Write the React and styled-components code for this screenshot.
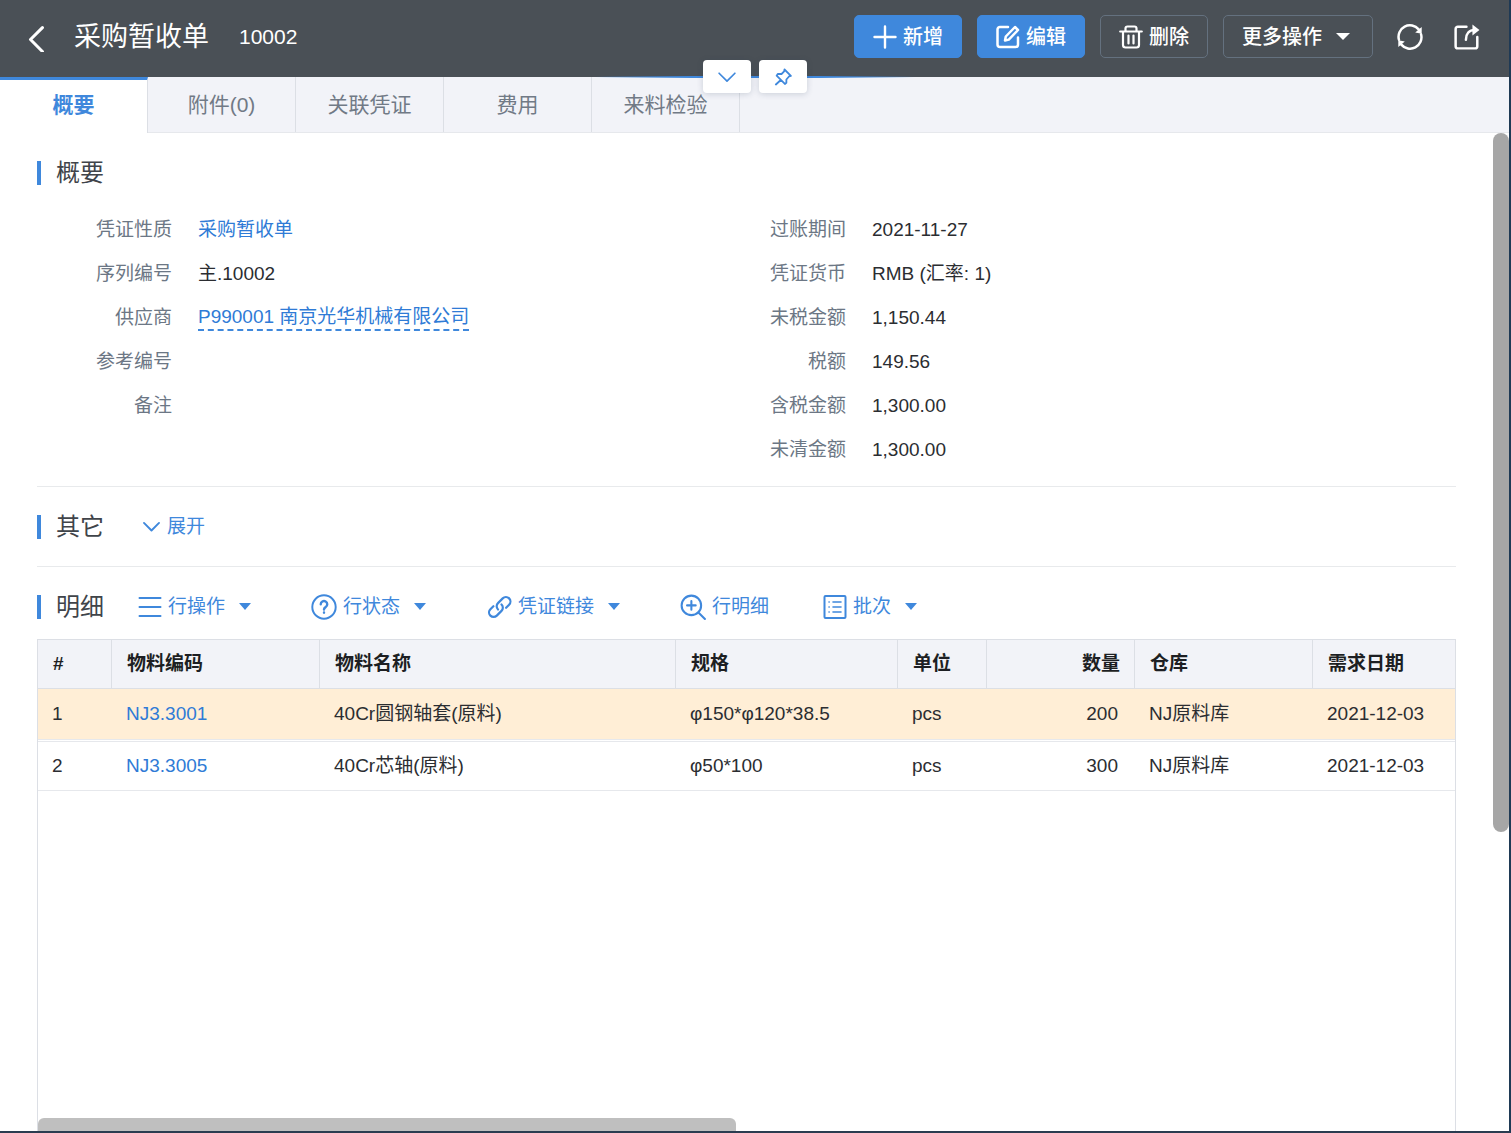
import React from 'react'
import styled, { createGlobalStyle } from 'styled-components'

const GlobalStyle = createGlobalStyle`
*{
    box-sizing: border-box;
}
body{
    margin: 0;
    background: #fff;
    color: #2b2d31;
    font-family: "Liberation Sans", "Noto Sans CJK SC", sans-serif;
    font-size: 19px;
    line-height: 28px;
}
button{
    margin: 0;
    padding: 0;
    border: 0;
    background: none;
    color: inherit;
    font: inherit;
    cursor: pointer;
}
a{
    color: #2f7bd6;
    text-decoration: none;
}
`

const Shell = styled.div`
display: flex;
flex-direction: column;
height: 100vh;
overflow: hidden;
border-right: 2px solid #1f3a55;
border-bottom: 2px solid #2a3c50;
`

const Header = styled.header`
display: flex;
align-items: center;
flex: none;
height: 77px;
padding: 0 29px 4px 24px;
background: #4a5056;
color: #fff;
position: relative;
`
const BackButton = styled.button`
display: flex;
margin-right: 24px;
padding-top: 4px;
`
const Title = styled.h1`
margin: 0;
font-size: 27px;
line-height: 40px;
font-weight: 400;
`
const DocNumber = styled.span`
margin-left: 30px;
font-size: 21px;
`
const Actions = styled.div`
display: flex;
align-items: center;
gap: 15px;
margin-left: auto;
`
const ActionButton = styled.button`
display: flex;
align-items: center;
justify-content: center;
gap: 6px;
height: 43px;
padding: 0 ${({ $menu }) => ($menu ? 22 : 18)}px 0 18px;
border: 1px solid ${({ $primary }) => ($primary ? '#3f88dc' : '#64717f')};
border-radius: 5px;
background: ${({ $primary }) => ($primary ? '#3f88dc' : 'transparent')};
font-size: 20px;
font-weight: 500;
`
const IconButton = styled.button`
display: flex;
margin-left: ${({ $gap }) => $gap}px;
`
const Handles = styled.div`
position: absolute;
top: 60px;
left: 50%;
transform: translateX(-50%);
display: flex;
gap: 8px;
z-index: 2;
`
const Handle = styled.button`
display: flex;
align-items: center;
justify-content: center;
width: 48px;
height: 33px;
border-radius: 4px;
background: #fff;
color: #3f88dc;
box-shadow: 0 1px 6px rgba(40, 60, 90, 0.2);
`
const HandleLine = styled.div`
position: absolute;
left: 50%;
bottom: -1px;
width: 320px;
height: 2px;
transform: translateX(-50%);
background: linear-gradient(90deg, transparent, #3f88dc 30%, #3f88dc 70%, transparent);
`

const Tabs = styled.nav`
display: flex;
flex: none;
height: 56px;
background: #f2f3f8;
border-bottom: 1px solid #e6e8ec;
`
const Tab = styled.button`
width: 148px;
height: ${({ $active }) => ($active ? 56 : 55)}px;
padding-bottom: ${({ $active }) => ($active ? 4 : 0)}px;
border-top: ${({ $active }) => ($active ? '3px solid #3f88dc' : '0')};
border-right: 1px solid #dcdfe5;
background: ${({ $active }) => ($active ? '#fff' : 'transparent')};
color: ${({ $active }) => ($active ? '#3f88dc' : '#717a86')};
font-size: 21px;
font-weight: ${({ $active }) => ($active ? 700 : 400)};
`

const Body = styled.div`
display: flex;
flex: 1;
min-height: 0;
`
const Content = styled.main`
display: flex;
flex-direction: column;
flex: 1;
min-width: 0;
padding: 0 37px;
`
const ScrollTrack = styled.div`
width: 16px;
flex: none;
`
const ScrollThumb = styled.div`
height: 70%;
border-radius: 8px;
background: #a6a6a6;
`

const Section = styled.section`
border-bottom: 1px solid #e8eaec;
`
const SectionHead = styled.div`
display: flex;
align-items: center;
height: 79px;
`
const SectionTitle = styled.h2`
display: flex;
align-items: center;
gap: 15px;
margin: 0;
font-size: 24px;
line-height: 36px;
font-weight: 400;
color: #40444a;

&::before{
    content: "";
    width: 4px;
    height: 24px;
    background: #3f88dc;
}
`
const Fields = styled.div`
display: grid;
grid-template-columns: 19fr 21fr;
margin-top: -4px;
padding-bottom: 14px;
`
const FieldList = styled.dl`
margin: 0;
`
const Field = styled.div`
display: flex;
align-items: center;
height: 44px;
`
const FieldLabel = styled.dt`
width: 135px;
margin-right: 26px;
text-align: right;
color: #6c7785;
`
const FieldValue = styled.dd`
margin: 0;
`
const SupplierLink = styled.a`
display: block;
line-height: 24px;
border-bottom: 2px dashed #3f88dc;
`

const ToolButton = styled.button`
display: flex;
align-items: center;
gap: 6px;
margin-left: ${({ $gap }) => $gap}px;
color: #3f88dc;
`
const Caret = styled.span`
margin-left: 8px;
border: ${({ $size }) => $size || 6}px solid transparent;
border-top-color: currentColor;
border-top-width: 7px;
border-bottom: 0;
`

const Details = styled.section`
display: flex;
flex-direction: column;
flex: 1;
min-height: 0;
`
const GridBox = styled.div`
display: flex;
flex-direction: column;
flex: 1;
min-height: 0;
margin-top: -7px;
border: 1px solid #dcdfe5;
border-bottom: 0;
overflow: hidden;
`
const Table = styled.table`
width: 100%;
table-layout: fixed;
border-collapse: separate;
border-spacing: 0;
`
const HeadCell = styled.th`
width: ${({ $width }) => ($width ? `${$width}px` : 'auto')};
height: 49px;
padding: 0 14px 0 15px;
border-right: 1px solid #dcdfe5;
border-bottom: 1px solid #dcdfe5;
background: #f2f3f8;
color: #1d1f23;
font-weight: 700;
text-align: ${({ $align }) => $align || 'left'};

&:last-child{
    border-right: 0;
}
`
const Cell = styled.td`
height: ${({ $selected }) => ($selected ? 53 : 49)}px;
padding: 0 17px 0 14px;
border-bottom: ${({ $selected }) => ($selected ? '3px double' : '1px solid')} #e6e8ec;
background: ${({ $selected }) => ($selected ? '#ffeed6' : '#fff')};
background-clip: padding-box;
text-align: ${({ $align }) => $align || 'left'};
white-space: nowrap;
`
const HScrollThumb = styled.div`
flex: none;
width: 698px;
max-width: 100%;
height: 13px;
margin-top: auto;
border-radius: 6px 6px 0 0;
background: #bfbfbf;
`

const Icon = ({ size = 24, stroke = 2, children }) => (
    <svg width={size} height={size} viewBox='0 0 24 24' fill='none' stroke='currentColor'
        strokeWidth={stroke} strokeLinecap='round' strokeLinejoin='round' aria-hidden='true'>
        {children}
    </svg>
)

const BackIcon = () => <Icon size={26} stroke={2.8}><path d='M17 1.5L6 12.5l11 11' /></Icon>
const PlusIcon = () => <Icon stroke={2.4}><path d='M12 1.500v21M1.500 12h21' /></Icon>
const EditIcon = () => (
    <Icon stroke={2.5}>
        <path d='M12 2H4a2.5 2.5 0 0 0-2.500 2.500v15A2.500 2.500 0 0 0 4 22h15.500a2.500 2.500 0 0 0 2.500-2.500V12.500' />
        <path d='M9 15.500l.8-4L19 2l3 3-9.200 9.600z' />
    </Icon>
)
const TrashIcon = () => (
    <Icon stroke={2.2}>
        <path d='M1.200 6.500h21.600M6.500 6V3.500a2 2 0 0 1 2-2h7a2 2 0 0 1 2 2V6M4 7v13a2.500 2.500 0 0 0 2.500 2.500h11A2.500 2.500 0 0 0 20 20V7M9.500 10.500v8M14.500 10.500v8' />
    </Icon>
)
const RefreshIcon = () => (
    <Icon size={26} stroke={2.3}>
        <path d='M1.800 14.500A10.500 10.500 0 0 1 20 5M22.200 9.500A10.500 10.500 0 0 1 4 19' />
        <path d='M22.800 2.800v6.200l-6-1.200zM1.200 21.200V15l6 1.200z' fill='currentColor' stroke='none' />
    </Icon>
)
const ShareIcon = () => (
    <Icon size={26} stroke={2.3}>
        <path d='M11.500 2.500H3.500a2 2 0 0 0-2 2v16a2 2 0 0 0 2 2h16a2 2 0 0 0 2-2V12M11 14.500C11 9 14 5.500 19 5.500' />
        <path d='M17 .5l6.500 5-6.500 5z' fill='currentColor' stroke='none' />
    </Icon>
)
const ChevronIcon = ({ size, stroke }) => <Icon size={size} stroke={stroke}><path d='M2.500 7.500l9.500 9.500 9.500-9.500' /></Icon>
const PinIcon = () => (
    <Icon size={18} stroke={2.4}>
        <path d='M14 2l8.500 8.500-2.500.8-3.500 4v4.500l-2 1.500-11-11L5 8h5l3.500-3.500zM9 16l-6.500 6' />
    </Icon>
)
const MenuIcon = () => <Icon><path d='M1.500 3h21M1.500 12h21M1.500 21h21' /></Icon>
const HelpIcon = () => (
    <Icon size={26} stroke={1.8}>
        <circle cx='12' cy='12' r='10.800' />
        <path d='M9 9.500a3 3 0 1 1 4.500 2.600c-1 .6-1.500 1-1.500 2.200M12 17v.2' strokeWidth='2.200' />
    </Icon>
)
const LinkIcon = () => (
    <Icon stroke={2.2}>
        <path d='M10 14.500a4.500 4.500 0 0 1 0-6.400l4.700-4.700a4.500 4.500 0 0 1 6.400 6.400l-3 3' />
        <path d='M13.500 9.500a4.500 4.500 0 0 1 0 6.400l-4.700 4.700a4.500 4.500 0 0 1-6.400-6.400l3-3' />
    </Icon>
)
const ZoomIcon = () => (
    <Icon size={26} stroke={1.9}>
        <circle cx='10.500' cy='10.500' r='9' />
        <path d='M10.500 6.500v8M6.500 10.500h8M17 17l6 6' />
    </Icon>
)
const BatchIcon = () => (
    <Icon>
        <rect x='1.500' y='1' width='21' height='22' rx='1' />
        <path d='M6 7h.2M6 12h.2M6 17h.2M10 7h8M10 12h8M10 17h8' strokeWidth='1.600' />
    </Icon>
)

const tabs = ['概要', '附件(0)', '关联凭证', '费用', '来料检验']

const leftFields = [
    { label: '凭证性质', value: <a href='#type'>采购暂收单</a> },
    { label: '序列编号', value: '主.10002' },
    { label: '供应商', value: <SupplierLink href='#supplier'>P990001 南京光华机械有限公司</SupplierLink> },
    { label: '参考编号', value: '' },
    { label: '备注', value: '' },
]

const rightFields = [
    { label: '过账期间', value: '2021-11-27' },
    { label: '凭证货币', value: 'RMB (汇率: 1)' },
    { label: '未税金额', value: '1,150.44' },
    { label: '税额', value: '149.56' },
    { label: '含税金额', value: '1,300.00' },
    { label: '未清金额', value: '1,300.00' },
]

const tools = [
    { label: '行操作', icon: <MenuIcon />, caret: true, gap: 34 },
    { label: '行状态', icon: <HelpIcon />, caret: true, gap: 60 },
    { label: '凭证链接', icon: <LinkIcon />, caret: true, gap: 62 },
    { label: '行明细', icon: <ZoomIcon />, gap: 60 },
    { label: '批次', icon: <BatchIcon />, caret: true, gap: 54 },
]

const columns = [
    { key: 'no', label: '#', width: 74 },
    { key: 'code', label: '物料编码', width: 208 },
    { key: 'name', label: '物料名称', width: 356 },
    { key: 'spec', label: '规格', width: 222 },
    { key: 'unit', label: '单位', width: 89 },
    { key: 'qty', label: '数量', width: 148, align: 'right' },
    { key: 'store', label: '仓库', width: 178 },
    { key: 'date', label: '需求日期' },
]

const rows = [
    { no: 1, code: 'NJ3.3001', name: '40Cr圆钢轴套(原料)', spec: 'φ150*φ120*38.5', unit: 'pcs', qty: 200, store: 'NJ原料库', date: '2021-12-03' },
    { no: 2, code: 'NJ3.3005', name: '40Cr芯轴(原料)', spec: 'φ50*100', unit: 'pcs', qty: 300, store: 'NJ原料库', date: '2021-12-03' },
]

const FieldColumn = ({ fields }) => (
    <FieldList>
        {fields.map(({ label, value }) => (
            <Field key={label}>
                <FieldLabel>{label}</FieldLabel>
                <FieldValue>{value}</FieldValue>
            </Field>
        ))}
    </FieldList>
)

const TopBar = () => (
    <Header>
        <BackButton aria-label='返回'><BackIcon /></BackButton>
        <Title>采购暂收单</Title>
        <DocNumber>10002</DocNumber>
        <Actions>
            <ActionButton $primary><PlusIcon />新增</ActionButton>
            <ActionButton $primary><EditIcon />编辑</ActionButton>
            <ActionButton><TrashIcon />删除</ActionButton>
            <ActionButton $menu>更多操作<Caret $size={7} /></ActionButton>
            <IconButton $gap={9} aria-label='刷新'><RefreshIcon /></IconButton>
            <IconButton $gap={16} aria-label='打开'><ShareIcon /></IconButton>
        </Actions>
        <HandleLine />
        <Handles>
            <Handle aria-label='收起'><ChevronIcon size={20} stroke={2} /></Handle>
            <Handle aria-label='固定'><PinIcon /></Handle>
        </Handles>
    </Header>
)

const ItemTable = () => (
    <Table>
        <thead>
            <tr>
                {columns.map(({ key, label, width, align }) => (
                    <HeadCell key={key} $width={width} $align={align}>{label}</HeadCell>
                ))}
            </tr>
        </thead>
        <tbody>
            {rows.map((row, i) => (
                <tr key={row.no}>
                    {columns.map(({ key, align }) => (
                        <Cell key={key} $align={align} $selected={i === 0}>
                            {key === 'code' ? <a href={`#${row.code}`}>{row.code}</a> : row[key]}
                        </Cell>
                    ))}
                </tr>
            ))}
        </tbody>
    </Table>
)

const App = () => {
    return (
        <>
            <GlobalStyle />
            <Shell>
                <TopBar />
                <Tabs>
                    {tabs.map((tab, i) => (
                        <Tab key={tab} $active={i === 0}>{tab}</Tab>
                    ))}
                </Tabs>
                <Body>
                    <Content>
                        <Section>
                            <SectionHead><SectionTitle>概要</SectionTitle></SectionHead>
                            <Fields>
                                <FieldColumn fields={leftFields} />
                                <FieldColumn fields={rightFields} />
                            </Fields>
                        </Section>
                        <Section>
                            <SectionHead>
                                <SectionTitle>其它</SectionTitle>
                                <ToolButton $gap={38}><ChevronIcon size={19} stroke={2.4} />展开</ToolButton>
                            </SectionHead>
                        </Section>
                        <Details>
                            <SectionHead>
                                <SectionTitle>明细</SectionTitle>
                                {tools.map(({ label, icon, caret, gap }) => (
                                    <ToolButton key={label} $gap={gap}>{icon}{label}{caret && <Caret />}</ToolButton>
                                ))}
                            </SectionHead>
                            <GridBox>
                                <ItemTable />
                                <HScrollThumb />
                            </GridBox>
                        </Details>
                    </Content>
                    <ScrollTrack><ScrollThumb /></ScrollTrack>
                </Body>
            </Shell>
        </>
    )
}

export default App
